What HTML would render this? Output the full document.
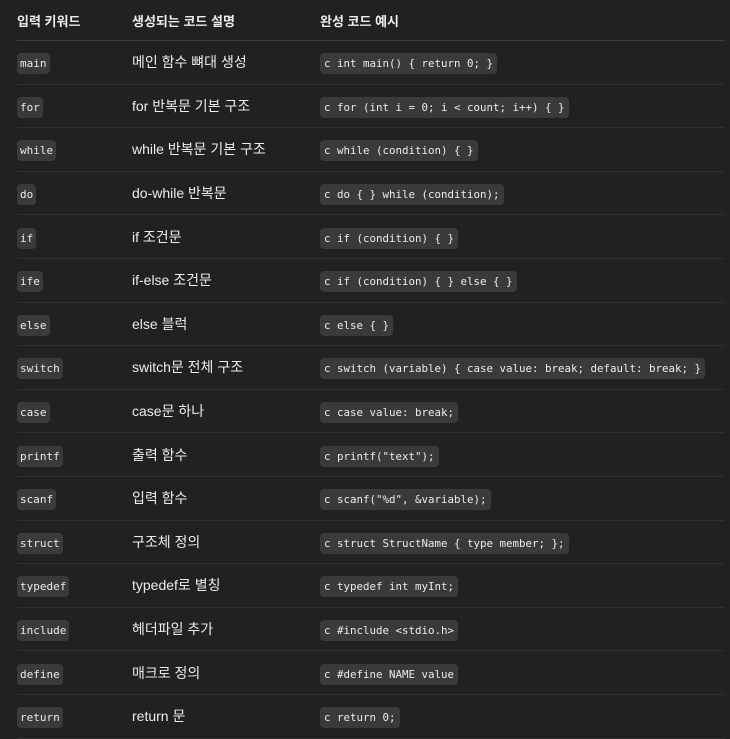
<!DOCTYPE html>
<html><head><meta charset="utf-8"><style>
html,body{margin:0;background:#212121;width:730px;height:734px;overflow:hidden}
table{position:absolute;left:17px;top:0;width:708px;border-collapse:collapse;font-family:"Liberation Sans","Noto Sans CJK KR",sans-serif;color:#ececec;table-layout:fixed}
th{font-size:13px;font-weight:bold;text-align:left;height:40px;padding:0;border-bottom:1px solid #3c3c3c;vertical-align:middle}
td{font-size:14px;height:42.6px;padding:0;border-bottom:1px solid #303030;vertical-align:middle;white-space:nowrap}
tr td:first-child,tr th:first-child{width:115px}
tr td:nth-child(2),tr th:nth-child(2){width:188px}
code{font-family:"DejaVu Sans Mono","Noto Sans CJK KR",monospace;background:#3a3a3a;border-radius:4px;padding:4px 4px;color:#ececec;white-space:nowrap}
td:first-child code{font-size:11px;padding:4px 3px}
td:nth-child(3) code{font-size:10.8px}
</style></head><body>
<table>
<tr><th>입력 키워드</th><th>생성되는 코드 설명</th><th>완성 코드 예시</th></tr>
<tr><td><code>main</code></td><td>메인 함수 뼈대 생성</td><td><code>c int main() { return 0; }</code></td></tr>
<tr><td><code>for</code></td><td>for 반복문 기본 구조</td><td><code>c for (int i = 0; i &lt; count; i++) { }</code></td></tr>
<tr><td><code>while</code></td><td>while 반복문 기본 구조</td><td><code>c while (condition) { }</code></td></tr>
<tr><td><code>do</code></td><td>do-while 반복문</td><td><code>c do { } while (condition);</code></td></tr>
<tr><td><code>if</code></td><td>if 조건문</td><td><code>c if (condition) { }</code></td></tr>
<tr><td><code>ife</code></td><td>if-else 조건문</td><td><code>c if (condition) { } else { }</code></td></tr>
<tr><td><code>else</code></td><td>else 블럭</td><td><code>c else { }</code></td></tr>
<tr><td><code>switch</code></td><td>switch문 전체 구조</td><td><code>c switch (variable) { case value: break; default: break; }</code></td></tr>
<tr><td><code>case</code></td><td>case문 하나</td><td><code>c case value: break;</code></td></tr>
<tr><td><code>printf</code></td><td>출력 함수</td><td><code>c printf("text");</code></td></tr>
<tr><td><code>scanf</code></td><td>입력 함수</td><td><code>c scanf("%d", &amp;variable);</code></td></tr>
<tr><td><code>struct</code></td><td>구조체 정의</td><td><code>c struct StructName { type member; };</code></td></tr>
<tr><td><code>typedef</code></td><td>typedef로 별칭</td><td><code>c typedef int myInt;</code></td></tr>
<tr><td><code>include</code></td><td>헤더파일 추가</td><td><code>c #include &lt;stdio.h&gt;</code></td></tr>
<tr><td><code>define</code></td><td>매크로 정의</td><td><code>c #define NAME value</code></td></tr>
<tr><td><code>return</code></td><td>return 문</td><td><code>c return 0;</code></td></tr>
</table>
</body></html>
